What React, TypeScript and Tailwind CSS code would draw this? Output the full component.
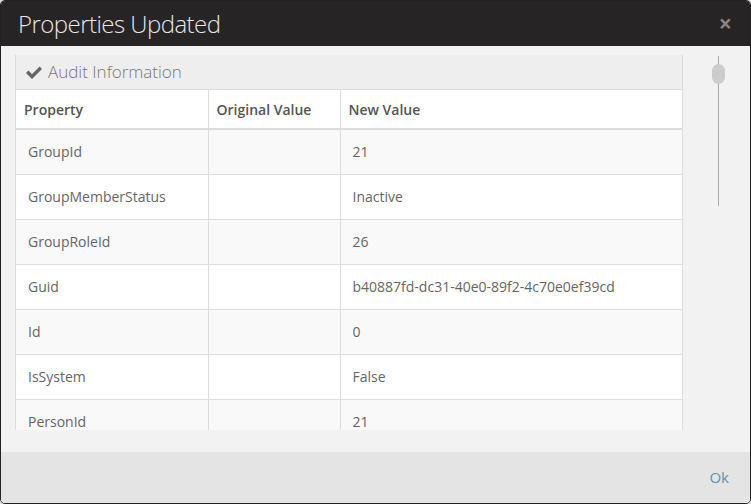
import React from 'react';

const rows: { name: string; original: string; value: string }[] = [
  { name: 'GroupId', original: '', value: '21' },
  { name: 'GroupMemberStatus', original: '', value: 'Inactive' },
  { name: 'GroupRoleId', original: '', value: '26' },
  { name: 'Guid', original: '', value: 'b40887fd-dc31-40e0-89f2-4c70e0ef39cd' },
  { name: 'Id', original: '', value: '0' },
  { name: 'IsSystem', original: '', value: 'False' },
  { name: 'PersonId', original: '', value: '21' },
];

const CheckIcon = () => (
  <svg width="16" height="13" viewBox="0 0 16 13" className="shrink-0">
    <polygon points="0,7 2.4,4.6 6,8.2 13.6,0.6 16,3 6,13" fill="#666" />
  </svg>
);

const App: React.FC = () => {
  return (
    <div
      className="w-[751px] h-[504px] bg-[#d9d9d9]"
      style={{ fontFamily: '"Open Sans", "Liberation Sans", sans-serif' }}
    >
      <div className="w-full h-full flex flex-col rounded-[5px] overflow-hidden border border-[#222] bg-[#f2f2f2]">
        <div className="h-[45px] shrink-0 bg-[#262424] flex items-center justify-between pl-[17px] pr-[18px]">
          <h1 className="text-[24px] font-light text-[#e6e6e6] tracking-[-0.55px]">Properties Updated</h1>
          <span className="text-[23px] font-bold text-[#8a8580] leading-none">×</span>
        </div>

        <div className="flex-1 flex pt-[9px] pl-[14px]">
          <div className="w-[668px] h-[375px] overflow-hidden border-l border-r border-[#dddddd]">
            <div className="h-[35px] bg-[#eeeeee] border-b border-[#dddddd] flex items-center gap-[6px] pl-[10px]">
              <CheckIcon />
              <span className="text-[17px] font-light text-[#777]">Audit Information</span>
            </div>
            <table className="w-full border-collapse text-[14px]">
              <thead>
                <tr className="h-[39px] bg-white border-b-2 border-[#dddddd]">
                  <th className="w-[192px] text-left font-semibold text-[#555] pl-[8px] border-r border-[#dddddd]">Property</th>
                  <th className="w-[132px] text-left font-semibold text-[#555] pl-[8px] border-r border-[#dddddd]">Original Value</th>
                  <th className="text-left font-semibold text-[#555] pl-[8px]">New Value</th>
                </tr>
              </thead>
              <tbody>
                {rows.map((r, i) => (
                  <tr key={r.name} className={`h-[45px] border-b border-[#dddddd] ${i % 2 === 0 ? 'bg-[#f9f9f9]' : 'bg-white'}`}>
                    <td className="pl-[12px] text-[#666] border-r border-[#dddddd]">{r.name}</td>
                    <td className="pl-[12px] text-[#666] border-r border-[#dddddd]">{r.original}</td>
                    <td className="pl-[12px] text-[#666]">{r.value}</td>
                  </tr>
                ))}
              </tbody>
            </table>
          </div>
          <div className="relative ml-[29px] w-[13px] h-[150px] mt-[1px]">
            <div className="absolute left-[6px] top-0 w-[1px] h-full bg-[#aaaaaa]" />
            <div className="absolute left-0 top-[8px] w-[13px] h-[20px] rounded-full bg-[#cccccc]" />
          </div>
        </div>

        <div className="h-[51px] shrink-0 bg-[#e4e4e4] flex items-center justify-end pr-[21px]">
          <span className="text-[15px] text-[#5b93b8]">Ok</span>
        </div>
      </div>
    </div>
  );
};

export default App;
